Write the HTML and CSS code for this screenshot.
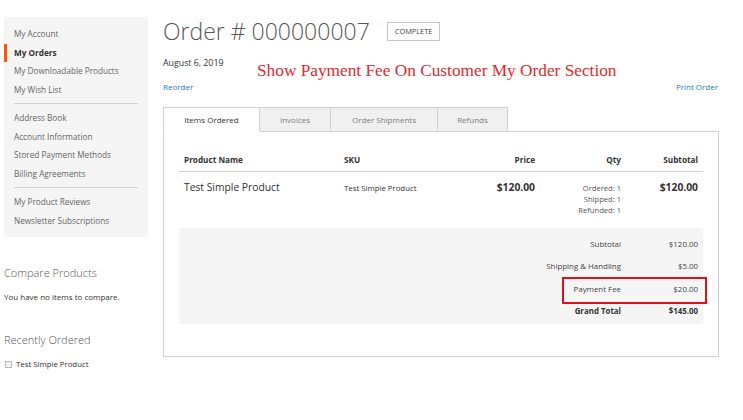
FILE: index.html
```html
<!DOCTYPE html>
<html lang="en">
<head>
  <meta charset="UTF-8" />
  <meta name="viewport" content="width=device-width, initial-scale=1.0"/>
  <title>Order # 000000007</title>
  <link rel="stylesheet" href="styles.css">
</head>
<body>

  <div class="page">
    <div class="sidebar">
      <ul class="account-nav">
        <li><a href="#">My Account</a></li>
        <li class="current"><strong>My Orders</strong></li>
        <li><a href="#">My Downloadable Products</a></li>
        <li><a href="#">My Wish List</a></li>
        <li class="sep"></li>
        <li><a href="#">Address Book</a></li>
        <li><a href="#">Account Information</a></li>
        <li><a href="#">Stored Payment Methods</a></li>
        <li><a href="#">Billing Agreements</a></li>
        <li class="sep"></li>
        <li><a href="#">My Product Reviews</a></li>
        <li><a href="#">Newsletter Subscriptions</a></li>
      </ul>

      <div class="block compare">
        <div class="block-title">Compare Products</div>
        <div class="block-text">You have no items to compare.</div>
      </div>

      <div class="block reorder">
        <div class="block-title">Recently Ordered</div>
        <label class="reorder-item"><span class="checkbox"></span> Test Simple Product</label>
      </div>
    </div>

    <div class="main">
      <div class="title-row">
        <h1>Order # 000000007</h1>
        <span class="status">Complete</span>
      </div>
      <div class="order-date">August 6, 2019</div>
      <div class="actions">
        <a href="#">Reorder</a>
        <a href="#">Print Order</a>
      </div>

      <div class="note">Show Payment Fee On Customer My Order Section</div>

      <div class="tabs">
        <div class="tab active">Items Ordered</div>
        <div class="tab">Invoices</div>
        <div class="tab">Order Shipments</div>
        <div class="tab">Refunds</div>
      </div>

      <div class="tab-content">
        <div class="table-wrap">
          <table class="items">
            <thead>
              <tr>
                <th class="col-name">Product Name</th>
                <th class="col-sku">SKU</th>
                <th class="col-price num">Price</th>
                <th class="col-qty num">Qty</th>
                <th class="col-sub num">Subtotal</th>
              </tr>
            </thead>
            <tbody>
              <tr>
                <td class="product-name">Test Simple Product</td>
                <td class="sku">Test Simple Product</td>
                <td class="price num">$120.00</td>
                <td class="qty num">
                  Ordered: 1<br>Shipped: 1<br>Refunded: 1
                </td>
                <td class="price num">$120.00</td>
              </tr>
            </tbody>
            <tfoot>
              <tr class="first">
                <td colspan="4" class="label">Subtotal</td>
                <td class="amount">$120.00</td>
              </tr>
              <tr>
                <td colspan="4" class="label">Shipping &amp; Handling</td>
                <td class="amount">$5.00</td>
              </tr>
              <tr>
                <td colspan="4" class="label">Payment Fee</td>
                <td class="amount">$20.00</td>
              </tr>
              <tr class="grand last">
                <td colspan="4" class="label">Grand Total</td>
                <td class="amount">$145.00</td>
              </tr>
            </tfoot>
          </table>
          <div class="highlight"></div>
        </div>
      </div>
    </div>
  </div>

</body>
</html>
```

FILE: styles.css
```css
body {
  margin: 0;
  font-family: "Open Sans", "DejaVu Sans", sans-serif;
  color: #333;
  background: #fff;
}
a {
  color: #1979c3;
  text-decoration: none;
}
.page {
  display: flex;
  padding: 17px 0 0 4px;
}

/* sidebar */
.sidebar {
  width: 144px;
  flex-shrink: 0;
}
.account-nav {
  list-style: none;
  margin: 0;
  padding: 8px 0 7px;
  background: #f5f5f5;
}
.account-nav li {
  height: 18.5px;
  line-height: 18.5px;
  padding-left: 7px;
  font-size: 8.2px;
  border-left: 3px solid transparent;
}
.account-nav li a {
  color: #666;
}
.account-nav li.current {
  border-left-color: #ff5501;
}
.account-nav li.current strong {
  color: #333;
  font-weight: 700;
}
.account-nav li.sep {
  height: 0;
  margin: 4px 10px 5px;
  padding: 0;
  border: none;
  border-top: 1px solid #d1d1d1;
}
.block {
  margin-top: 28px;
}
.block-title {
  font-size: 11px;
  font-weight: 300;
  color: #575757;
  line-height: 16px;
}
.block-text {
  font-size: 8px;
  color: #333;
  margin-top: 10px;
}
.reorder {
  margin-top: 30px;
}
.reorder-item {
  display: flex;
  align-items: center;
  gap: 4px;
  margin-top: 11px;
  font-size: 7.8px;
  color: #333;
}
.checkbox {
  width: 5px;
  height: 5px;
  border: 1px solid #bbb;
  background: #f3f3f3;
  margin-left: 1px;
}

/* main */
.main {
  position: relative;
  width: 556px;
  margin-left: 15px;
}
.title-row {
  display: flex;
  align-items: center;
  height: 28px;
}
h1 {
  margin: 0;
  font-size: 23px;
  font-weight: 300;
  color: #575757;
  line-height: 28px;
}
.status {
  margin-left: 17px;
  border: 1px solid #c7c7c7;
  padding: 0 7px;
  height: 17px;
  line-height: 17px;
  font-size: 7.4px;
  text-transform: uppercase;
  color: #444;
}
.order-date {
  margin-top: 11px;
  font-size: 8.8px;
  line-height: 14px;
  color: #333;
}
.actions {
  display: flex;
  justify-content: space-between;
  margin-top: 10px;
  font-size: 8px;
  line-height: 14px;
  padding-right: 1px;
}
.note {
  position: absolute;
  left: 94px;
  top: 44px;
  font-family: "Liberation Serif", "Times New Roman", serif;
  font-size: 17.3px;
  color: #e42a2f;
}

/* tabs */
.tabs {
  display: flex;
  margin-top: 13px;
  position: relative;
  z-index: 1;
}
.tab {
  height: 23px;
  line-height: 23px;
  font-size: 8px;
  color: #7d7d7d;
  background: #f0f0f0;
  border: 1px solid #d1d1d1;
  border-left: none;
  text-align: center;
}
.tab:nth-child(1) { width: 95px; }
.tab:nth-child(2) { width: 70px; }
.tab:nth-child(3) { width: 106px; }
.tab:nth-child(4) { width: 69px; }
.tab.active {
  background: #fff;
  color: #333;
  border-left: 1px solid #d1d1d1;
  border-bottom-color: #fff;
}
.tab-content {
  border: 1px solid #d1d1d1;
  margin-top: -1px;
  padding: 16px 15px 32px;
}
.table-wrap {
  position: relative;
}
.items {
  width: 524px;
  border-collapse: collapse;
  font-size: 8.2px;
  table-layout: fixed;
}
.col-name { width: 150px; }
.col-sku { width: 120px; }
.col-price { width: 61px; }
.col-qty { width: 76px; }
.col-sub { width: 67px; }
.items th {
  text-align: left;
  font-weight: 700;
  color: #333;
  padding: 6px 5px;
  line-height: 11px;
  border-bottom: 1px solid #d1d1d1;
}
.items .num {
  text-align: right;
}
.items tbody td {
  vertical-align: top;
  padding: 8px 5px 0;
  height: 45px;
  color: #333;
}
.product-name {
  font-size: 10.3px;
  line-height: 14px;
}
.sku {
  font-size: 7.8px;
  line-height: 14px;
  padding-top: 9px !important;
}
.items tbody td.price {
  font-size: 10.3px;
  font-weight: 700;
  line-height: 14px;
  color: #333;
}
.items tbody td.qty {
  font-size: 7.6px;
  line-height: 11px;
  color: #555;
  padding-top: 11px;
}
.items tfoot td {
  background: #f5f5f5;
  text-align: right;
  font-size: 7.9px;
  line-height: 12.3px;
  padding: 5px 5px;
  color: #444;
}
.items tfoot tr.first td {
  padding-top: 10px;
}
.items tfoot tr.last td {
  padding-bottom: 7px;
}
.items tfoot tr.grand td {
  font-weight: 700;
  color: #333;
}
.highlight {
  position: absolute;
  left: 383px;
  top: 129px;
  width: 141px;
  height: 23px;
  border: 2px solid #e0101a;
}
```
